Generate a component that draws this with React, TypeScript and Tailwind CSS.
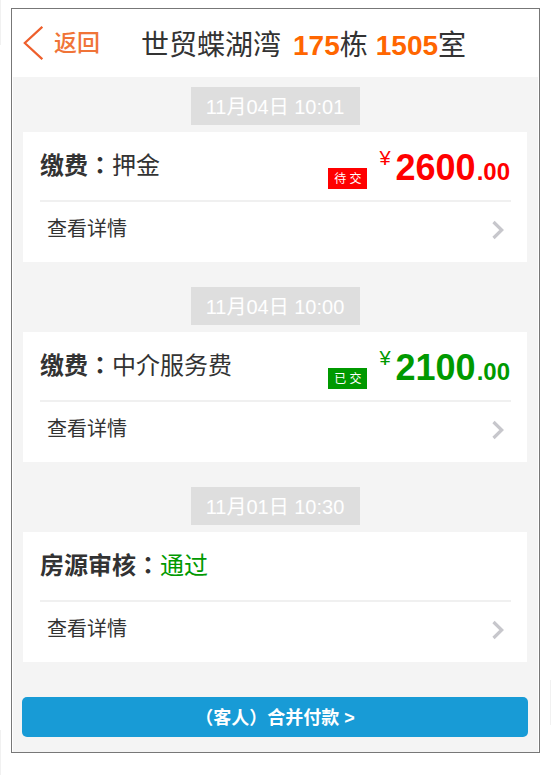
import type { ReactNode } from "react";

type Fee = { amount: string; cents: string; status: string; paid: boolean };

type Entry = {
  time: string;
  label: string;
  value: string;
  valueClass: string;
  fee?: Fee;
};

const entries: Entry[] = [
  {
    time: "11月04日 10:01",
    label: "缴费",
    value: "押金",
    valueClass: "text-[#333333]",
    fee: { amount: "2600", cents: ".00", status: "待 交", paid: false },
  },
  {
    time: "11月04日 10:00",
    label: "缴费",
    value: "中介服务费",
    valueClass: "text-[#333333]",
    fee: { amount: "2100", cents: ".00", status: "已 交", paid: true },
  },
  {
    time: "11月01日 10:30",
    label: "房源审核",
    value: "通过",
    valueClass: "text-[#009900]",
  },
];

/* Full-width punctuation centred in its cell. */
function Punct({ children }: { children: ReactNode }) {
  return (
    <span lang="zh-TW" className="font-['Noto_Sans_CJK_TC',sans-serif]">
      {children}
    </span>
  );
}

function Price({ fee }: { fee: Fee }) {
  return (
    <div className={fee.paid ? "flex items-end pr-px text-[#009900]" : "flex items-end pr-px text-[#ff0000]"}>
      <span
        className={
          fee.paid
            ? "mr-3 mb-[3px] flex h-[21px] w-[39px] items-center justify-center bg-[#009900] text-xs text-white"
            : "mr-3 mb-[3px] flex h-[21px] w-[39px] items-center justify-center bg-[#ff0000] text-xs text-white"
        }
      >
        {fee.status}
      </span>
      <span className="mr-[5px] self-start text-xl leading-5">¥</span>
      <span className="flex items-baseline font-bold">
        <span className="text-4xl leading-10">{fee.amount}</span>
        <span className="ml-px text-2xl leading-10">{fee.cents}</span>
      </span>
    </div>
  );
}

function Card({ entry }: { entry: Entry }) {
  return (
    <section className="flex flex-col items-center">
      <time className="mb-[7px] h-[38px] w-[169px] bg-[#dedede] text-center text-xl leading-10 text-white">
        {entry.time}
      </time>
      <div className="w-full bg-white pr-4 pl-[17px]">
        <div className="flex h-[70px] justify-between border-b-2 border-[#f0f0f0]">
          <h2 className="pt-[14px] text-2xl leading-9 font-normal">
            <b>
              {entry.label}
              <Punct>：</Punct>
            </b>
            <span className={entry.valueClass}>{entry.value}</span>
          </h2>
          {entry.fee && (
            <div className="pt-4">
              <Price fee={entry.fee} />
            </div>
          )}
        </div>
        <a href="#detail" className="flex h-[60px] items-start justify-between px-[7px] pt-[11px] text-xl leading-8">
          查看详情
          <svg viewBox="0 0 12 20" className="mt-[7px] h-5 w-3" fill="none" stroke="#c7c7cc" strokeWidth="3.2" aria-hidden="true">
            <path d="M1.5 2 9.7 10 1.5 18" />
          </svg>
        </a>
      </div>
    </section>
  );
}

export default function App() {
  return (
    <div className="flex h-screen min-h-[775px] bg-white font-['Liberation_Sans','Noto_Sans_CJK_SC',sans-serif] text-[#333333]">
      <div className="flex w-[11px] shrink-0 flex-col justify-between" aria-hidden="true">
        <div className="h-[45px] w-px bg-[#f1f1f1]" />
        <div className="h-[45px] w-px bg-[#f1f1f1]" />
      </div>

      <div className="mt-2 flex-1 self-start border border-[#777777] px-px">
        <header className="flex h-[68px] items-center pl-[10px]">
          <button type="button" className="flex items-center text-[23px] font-medium text-[#f07438]">
            <svg viewBox="0 0 20 34" className="mr-[11px] h-[34px] w-5" fill="none" stroke="#ee5f2c" strokeWidth="2.2" aria-hidden="true">
              <path d="M19.3 .8 1.8 17 19.3 33.2" />
            </svg>
            返回
          </button>
          <h1 className="ml-[41px] flex pt-[6px] text-[28px] leading-10 font-normal">
            <span className="mr-3">世贸蝶湖湾</span>
            <span className="mr-2">
              <b className="text-[#ff6600]">175</b>栋
            </span>
            <span>
              <b className="text-[#ff6600]">1505</b>室
            </span>
          </h1>
        </header>

        <main className="bg-[#f4f4f4] pt-[10px] pr-[11px] pb-[15px] pl-[10px]">
          <div className="flex flex-col gap-[25px]">
            {entries.map((entry) => (
              <Card key={entry.time} entry={entry} />
            ))}
          </div>
          <button type="button" className="mt-[35px] -ml-px flex h-10 w-[calc(100%+2px)] items-center justify-center rounded-[5px] bg-[#189bd6] text-lg font-bold text-white">
            <span>
              <Punct>（</Punct>客人<Punct>）</Punct>合并付款 &gt;
            </span>
          </button>
        </main>
      </div>

      <div className="flex w-[11px] shrink-0 flex-col items-end justify-end pb-[50px]" aria-hidden="true">
        <div className="h-[45px] w-px bg-[#f1f1f1]" />
      </div>
    </div>
  );
}
